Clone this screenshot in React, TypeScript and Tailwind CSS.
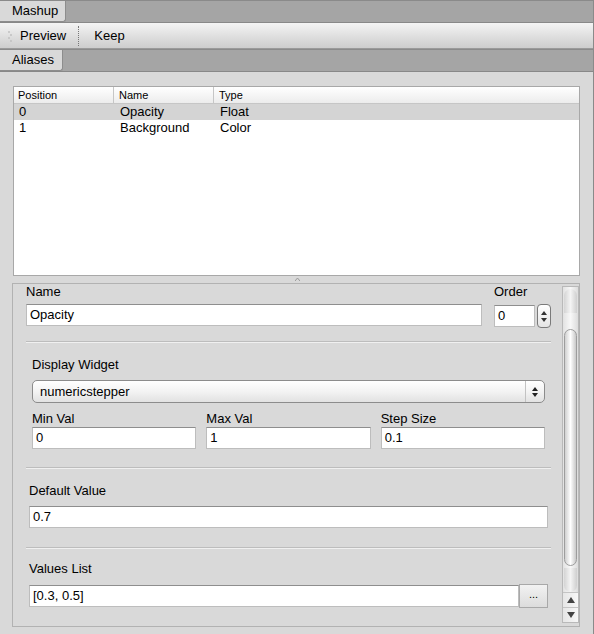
import React from "react";

const field =
  "bg-white border border-[#bdbdbd] border-t-[#8e8e8e] h-[22px] px-[3px] flex items-center text-[13px] text-black";

function TabBar({ label, width }: { label: string; width: number }) {
  return (
    <div className="h-[23px] bg-[#a5a5a5] border-t border-[#8a8a8a] border-b border-b-[#888] flex">
      <div
        className="h-[21px] bg-[#d9d9d9] border-r border-b border-[#8d8d8d] rounded-br-[3px] flex items-center pl-[12px] text-[13px] text-black"
        style={{ width }}
      >
        {label}
      </div>
    </div>
  );
}

function Separator() {
  return <div className="h-[2px] border-t border-[#bdbdbd] border-b border-b-[#f0f0f0]" />;
}

function Stepper() {
  return (
    <div className="w-[14px] h-[24px] rounded-[4px] border border-[#7a7a7a] bg-gradient-to-b from-white to-[#e4e4e4] flex flex-col items-center justify-center gap-[3px]">
      <svg width="6" height="4" viewBox="0 0 6 4">
        <path d="M3 0 L6 4 L0 4 Z" fill="#333" />
      </svg>
      <svg width="6" height="4" viewBox="0 0 6 4">
        <path d="M0 0 L6 0 L3 4 Z" fill="#333" />
      </svg>
    </div>
  );
}

function ScrollBar() {
  return (
    <div className="w-[17px] h-full flex flex-col border border-[#b9b9b9] bg-[#e9e9e9]">
      <div className="flex-1 relative bg-gradient-to-r from-[#e2e2e2] via-[#f8f8f8] to-[#dcdcdc]">
        <div className="absolute left-[1px] right-[1px] top-[2px] h-[24px] rounded-t-full bg-gradient-to-r from-[#d4d4d4] via-[#f4f4f4] to-[#cfcfcf]" />
        <div className="absolute left-[1px] right-[1px] top-[42px] bottom-[26px] rounded-full border border-[#9d9d9d] bg-gradient-to-r from-[#d0d0d0] via-white to-[#c8c8c8]" />
        <div className="absolute left-[1px] right-[1px] bottom-0 h-[24px] rounded-b-full bg-gradient-to-r from-[#d4d4d4] via-[#f4f4f4] to-[#cfcfcf]" />
      </div>
      <div className="h-[15px] border-t border-[#c4c4c4] bg-gradient-to-r from-[#e6e6e6] to-[#f7f7f7] flex items-center justify-center">
        <svg width="8" height="6" viewBox="0 0 8 6">
          <path d="M4 0 L8 6 L0 6 Z" fill="#444" />
        </svg>
      </div>
      <div className="h-[15px] border-t border-[#c4c4c4] bg-gradient-to-r from-[#e6e6e6] to-[#f7f7f7] flex items-center justify-center">
        <svg width="8" height="6" viewBox="0 0 8 6">
          <path d="M0 0 L8 0 L4 6 Z" fill="#444" />
        </svg>
      </div>
    </div>
  );
}

export default function App() {
  const rows = [
    { pos: "0", name: "Opacity", type: "Float" },
    { pos: "1", name: "Background", type: "Color" },
  ];
  return (
    <div
      className="w-[594px] h-[634px] bg-[#d9d9d9] overflow-hidden flex flex-col border-r border-[#8a8a8a] text-black"
      style={{ fontFamily: '"Liberation Sans", Arial, sans-serif' }}
    >
      <TabBar label="Mashup" width={66} />
      <div className="h-[26px] bg-gradient-to-b from-[#f4f4f4] to-[#cdcdcd] border-b border-[#9a9a9a] flex items-center text-[13px]">
        <div className="w-[20px] flex justify-center">
          <svg width="6" height="12" viewBox="0 0 6 12">
            <circle cx="2" cy="2" r="1" fill="#c0c0c0" />
            <circle cx="4" cy="5" r="1" fill="#c0c0c0" />
            <circle cx="2" cy="8" r="1" fill="#c0c0c0" />
            <circle cx="4" cy="11" r="1" fill="#c0c0c0" />
          </svg>
        </div>
        <span>Preview</span>
        <div className="ml-[12px] h-[20px] border-l border-dotted border-[#777]" />
        <span className="ml-[15px]">Keep</span>
      </div>
      <TabBar label="Aliases" width={63} />

      <div className="flex-1 flex flex-col pl-[12px] pr-[13px] pt-[14px]">
        {/* table */}
        <div className="ml-[1px] h-[190px] bg-white border border-[#a8a8a8] flex flex-col">
          <div className="h-[17px] flex text-[11px] border-b border-[#c6c6c6] bg-gradient-to-b from-white to-[#ececec]">
            <div className="w-[100px] pl-[4px] border-r border-[#c6c6c6] flex items-center">Position</div>
            <div className="w-[100px] pl-[5px] border-r border-[#c6c6c6] flex items-center">Name</div>
            <div className="flex-1 pl-[5px] flex items-center">Type</div>
          </div>
          {rows.map((r, i) => (
            <div
              key={r.pos}
              className={`h-[16px] flex text-[13px] items-center ${i === 0 ? "bg-[#d4d4d4]" : ""}`}
            >
              <div className="w-[100px] pl-[5px]">{r.pos}</div>
              <div className="w-[100px] pl-[6px]">{r.name}</div>
              <div className="flex-1 pl-[6px]">{r.type}</div>
            </div>
          ))}
        </div>

        {/* splitter */}
        <div className="h-[7px] flex justify-center items-center">
          <svg width="5" height="3" viewBox="0 0 5 3" className="ml-[2px]">
            <path d="M0 3 L2.5 0 L5 3" fill="none" stroke="#9a9a9a" strokeWidth="1" />
          </svg>
        </div>

        {/* form */}
        <div className="h-[344px] border border-[#b2b2b2] flex">
          <div className="flex-1 flex flex-col pl-[13px] pr-[11px]">
            <div className="flex gap-[12px]">
              <div className="flex-1 flex flex-col">
                <div className="h-[16px] text-[13px] leading-[16px]">Name</div>
                <div className={`${field} mt-[4px]`}>Opacity</div>
              </div>
              <div className="flex flex-col">
                <div className="h-[16px] text-[13px] leading-[16px]">Order</div>
                <div className="flex items-center gap-[2px] mt-[4px]">
                  <div className={`${field} w-[41px]`}>0</div>
                  <Stepper />
                </div>
              </div>
            </div>

            <div className="mt-[13px]">
              <Separator />
            </div>

            <div className="px-[6px] flex flex-col pt-[14px]">
              <div className="h-[16px] text-[13px] leading-[16px]">Display Widget</div>
              <div className="mt-[7px] h-[23px] rounded-[5px] border border-[#8c8c8c] bg-gradient-to-b from-white via-[#f3f3f3] to-[#e2e2e2] flex items-center text-[13px]">
                <span className="flex-1 pl-[7px]">numericstepper</span>
                <div className="w-[19px] h-full border-l border-[#c2c2c2] flex flex-col items-center justify-center gap-[2px]">
                  <svg width="6" height="4" viewBox="0 0 6 4">
                    <path d="M3 0 L6 4 L0 4 Z" fill="#222" />
                  </svg>
                  <svg width="6" height="4" viewBox="0 0 6 4">
                    <path d="M0 0 L6 0 L3 4 Z" fill="#222" />
                  </svg>
                </div>
              </div>
              <div className="mt-[8px] flex gap-[10px]">
                {[
                  ["Min Val", "0"],
                  ["Max Val", "1"],
                  ["Step Size", "0.1"],
                ].map(([l, v]) => (
                  <div key={l} className="flex-1 flex flex-col">
                    <div className="h-[16px] text-[13px] leading-[16px]">{l}</div>
                    <div className={`${field} h-[21px]`}>{v}</div>
                  </div>
                ))}
              </div>
            </div>

            <div className="mt-[18px]">
              <Separator />
            </div>

            <div className="pl-[3px] pr-[3px] flex flex-col pt-[14px]">
              <div className="h-[16px] text-[13px] leading-[16px]">Default Value</div>
              <div className={`${field} mt-[7px]`}>0.7</div>
            </div>

            <div className="mt-[19px]">
              <Separator />
            </div>

            <div className="pl-[3px] pr-[3px] flex flex-col pt-[12px]">
              <div className="h-[16px] text-[13px] leading-[16px]">Values List</div>
              <div className="mt-[8px] flex">
                <div className={`${field} flex-1`}>[0.3, 0.5]</div>
                <div className="w-[29px] h-[24px] -mt-[1px] border border-[#a8a8a8] bg-gradient-to-b from-[#f2f2f2] to-[#dcdcdc] flex items-center justify-center text-[11px] leading-none pb-[3px]">
                  ...
                </div>
              </div>
            </div>
          </div>
          <div className="pt-[2px] pb-[3px]">
            <ScrollBar />
          </div>
        </div>
      </div>
    </div>
  );
}
